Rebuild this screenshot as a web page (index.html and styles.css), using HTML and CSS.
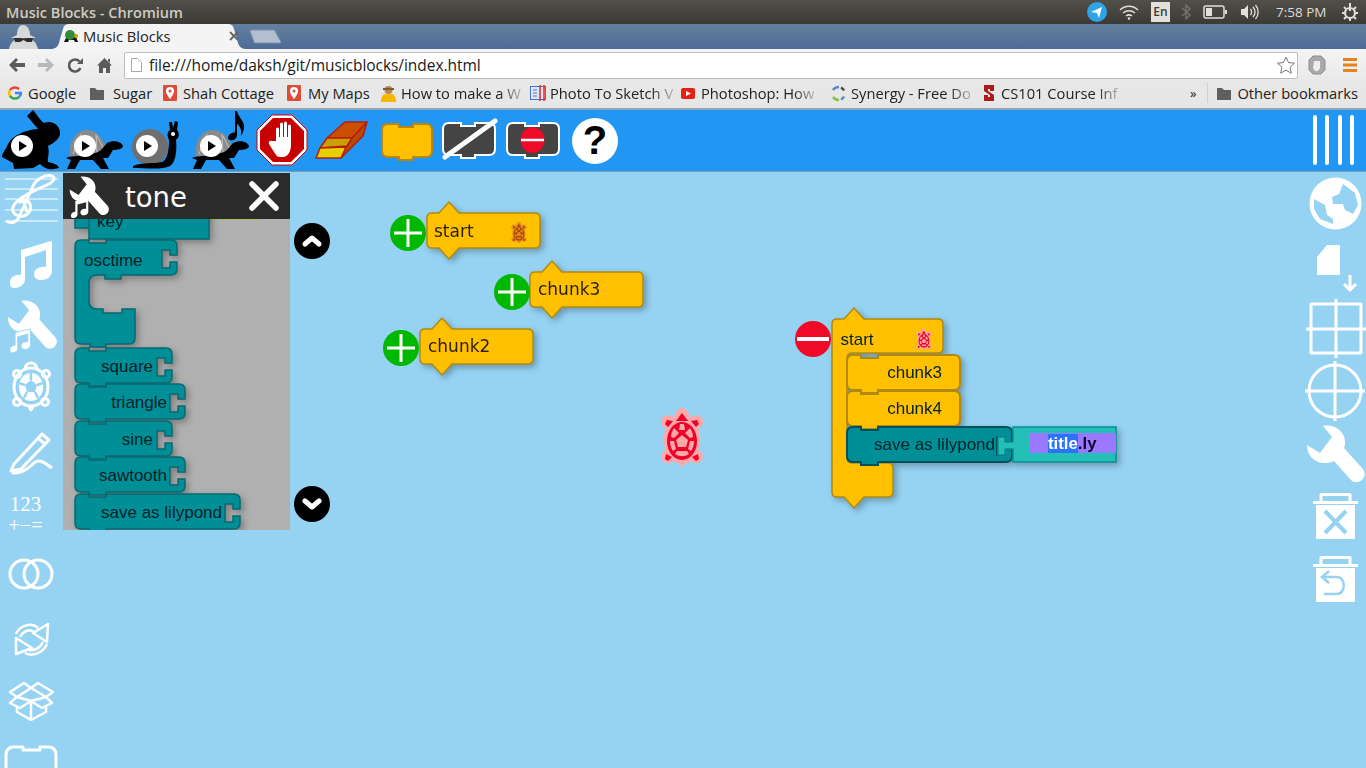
FILE: index.html
```html
<!DOCTYPE html>
<html lang="en">
<head>
<meta charset="utf-8">
<title>Music Blocks</title>
<link rel="stylesheet" href="styles.css">
</head>
<body>
<svg class="defs" aria-hidden="true">
  <defs>
    <symbol id="run-turtle" viewBox="0 0 63 64">
      <path fill="#8a8a8a" d="M7 48C5 35 12 22 24 22c11 0 16 10 21 20l-7 4-8 2z"/>
      <path fill="none" stroke="#c4c4c4" d="M10 46l8-20M33 26l1 20M40 40l-6-12"/>
      <path fill="#000" d="M3 50c5-3 27-1 35-8l6-7c6-3 14-2 16 3 0 3-6 4-10 4l-5 8h-5l6 11h-8l-8-9H17l-5 9H4l4-9z"/>
      <circle cx="22" cy="38" r="11" fill="#fff"/>
      <path fill="#000" d="M19 33l8 5-8 5z"/>
    </symbol>
    <path id="wrench" d="M17 1C27-1 38 5 39 16c0 3 0 5-1 7l18 20c4 4 3 9 0 12-4 3-8 3-11 0L28 36c-8 4-18 2-23-4-3-4-4-8-4-12l13 8 12-16z"/>
    <path id="note-glyph" d="M6 4l18-4v19c0 3-3 5-6 5s-5-2-5-4c0-3 3-5 6-5h2V6L9 9v14c0 3-3 5-6 5s-3-2-3-4c0-3 3-5 6-5z"/>
    <g id="turtle-art">
      <path class="t-halo" d="M22 0c4 0 7 5 8 10 3-3 8-4 11-1s3 8-1 10l-2 2c3 6 3 15 0 21 4 1 6 6 4 10-3 4-8 4-11 1-2 1-4 2-6 3l-3 3-3-3c-2-1-4-2-6-3-3 3-8 3-11-1-2-4 0-9 4-10-3-6-3-15 0-21l-2-2C0 17 0 12 3 9s8-2 11 1c1-5 4-10 8-10z"/>
      <path class="t-body" d="M22 5l6 8H16zM7 12l6 1-5 6-3-3zM37 12l2 4-3 3-5-6zM6 46l6 3-4 4-3-2zM38 46l1 5-3 2-4-4z"/>
      <ellipse class="t-body" cx="22" cy="33" rx="15" ry="19"/>
      <path class="t-halo" d="M22 27l6 5-2 7h-8l-2-7zM14 20l5 5-5 5-3-1c0-3 1-6 3-9zM30 20c2 3 3 6 3 9l-3 1-5-5zM20 16h4l1 6h-6zM10 33l4 0 2 8-3 2c-2-3-3-6-3-10zM34 33c0 4-1 7-3 10l-3-2 2-8zM17 43h10l2 3c-4 3-10 3-14 0z"/>
    </g>
    <path id="hat" d="M5 11h7L22 0l10 11h76q5 0 5 5v25q0 5-5 5H32L22 57 12 46H5q-5 0-5-5V16q0-5 5-5z"/>
    <path id="plain-block" d="M6 0h8v3h17V0h76q6 0 6 6v23q0 6-6 6H31v3H14v-3H6q-6 0-6-6V6q0-6 6-6z"/>
  </defs>
</svg>

<header class="titlebar">
  <span class="window-title">Music Blocks - Chromium</span>
  <div class="tray">
    <svg class="tray-telegram" width="20" height="20" viewBox="0 0 20 20"><circle cx="10" cy="10" r="10" fill="#2fa3e6"/><path fill="#fff" d="M4 10l11-5-3 11-2-5z"/></svg>
    <svg class="tray-wifi" width="20" height="16" viewBox="0 0 20 16"><g fill="none" stroke="#e0ded8" stroke-width="1.5"><path d="M1 6c5-5 13-5 18 0M4 9c3.500-3 8.500-3 12 0M7 12c2-1.500 4-1.500 6 0"/></g><circle cx="10" cy="14.500" r="1.300" fill="#e0ded8"/></svg>
    <span class="tray-lang">En</span>
    <svg class="tray-bt" width="10" height="16" viewBox="0 0 10 16"><path fill="none" stroke="#77756f" stroke-width="1.300" d="M1 4l8 7-4 4V1l4 4-8 7"/></svg>
    <svg class="tray-batt" width="24" height="14" viewBox="0 0 24 14"><rect x="1" y="1" width="20" height="12" rx="2" fill="none" stroke="#e0ded8" stroke-width="1.500"/><rect x="3" y="3" width="6" height="8" fill="#e0ded8"/><rect x="22" y="5" width="2" height="4" fill="#e0ded8"/></svg>
    <svg class="tray-vol" width="20" height="16" viewBox="0 0 20 16"><path fill="#e0ded8" d="M1 5h3l4-4v14l-4-4H1z"/><path fill="none" stroke="#e0ded8" stroke-width="1.300" d="M10.500 5c1.500 2 1.500 4 0 6M13 3c2.500 3 2.500 7 0 10M15.500 1c3.500 4 3.500 10 0 14"/></svg>
    <span class="tray-time">7:58 PM</span>
    <svg class="tray-power" width="18" height="18" viewBox="0 0 18 18"><circle cx="9" cy="10" r="5" fill="none" stroke="#e0ded8" stroke-width="2.200"/><path stroke="#e0ded8" stroke-width="2" d="M9 0v8M1 10h2M15 10h2M3 4l2 2M15 4l-2 2M3 16l2-2M15 16l-2-2M9 15v3"/></svg>
  </div>
</header>

<div class="tabstrip">
  <svg class="incognito" width="33" height="24" viewBox="0 0 33 24"><path fill="#d8d8d8" d="M10 10C10 4 12 0 16 0s7 4 7 10l6 3H4zM2 24c1-5 4-9 8-10h13c4 1 7 5 8 10z"/><path fill="#303030" d="M7 13h7l2.500 1 2.500-1h7l-1 4h-5l-3.500-2-3.500 2H8z"/></svg>
  <div class="tab">
    <svg class="tab-shape" width="193" height="25" viewBox="0 0 193 25" preserveAspectRatio="none"><path fill="#f4f4f4" d="M0 25C6 24 7 20 8 15L11 5C12 1 14 0 18 0H175C179 0 181 1 182 5L185 15C186 20 187 24 193 25Z"/></svg>
    <svg class="tab-fav" width="16" height="16" viewBox="0 0 16 16"><path fill="#111" d="M1 14l2-4 10-1 2 5h-3l-1-2H6l-1 2z"/><ellipse cx="7" cy="7" rx="5" ry="5" fill="#2e8b3a"/><circle cx="13" cy="8" r="2" fill="#c8a000"/></svg>
    <span class="tab-title">Music Blocks</span>
    <svg class="tab-close" width="10" height="10" viewBox="0 0 10 10"><path stroke="#666" stroke-width="1.800" d="M1 1l8 8M9 1L1 9"/></svg>
  </div>
  <svg class="newtab" width="33" height="15" viewBox="0 0 33 15"><path fill="#b3bfd0" stroke="#7c8ea9" d="M1 2c0-1 1-1 2-1h21c1 0 2 0 2 1l6 11c0 1-1 1-2 1H7c-1 0-2 0-2-1z"/></svg>
</div>

<nav class="navbar">
  <svg class="nav-back" width="16" height="14" viewBox="0 0 16 14"><path fill="#5a5a5a" d="M7 0l2 2-3 3h10v4H6l3 3-2 2-7-7z"/></svg>
  <svg class="nav-fwd" width="16" height="14" viewBox="0 0 16 14"><path fill="#b9b9b9" d="M9 0L7 2l3 3H0v4h10l-3 3 2 2 7-7z"/></svg>
  <svg class="nav-reload" width="15" height="15" viewBox="0 0 15 15"><path fill="none" stroke="#5a5a5a" stroke-width="2.600" d="M12.500 10A6 6 0 1 1 11.500 3.500"/><path fill="#5a5a5a" d="M9 6h6V0z"/></svg>
  <svg class="nav-home" width="15" height="15" viewBox="0 0 15 15"><path fill="#5a5a5a" d="M7.500 0L15 7.500h-2V15H9v-5H6v5H2V7.500H0zM11 1h2v4l-2-2z"/></svg>
  <div class="omnibox">
    <svg class="page-icon" width="11" height="14" viewBox="0 0 11 14"><path fill="#fff" stroke="#a8a8a8" d="M.5.500h6l4 4v9H.5z"/></svg>
    <span class="url">file:///home/daksh/git/musicblocks/index.html</span>
    <svg class="star" width="18" height="18" viewBox="0 0 18 18"><path fill="#fff" stroke="#777" d="M9 1l2.500 5.500 6 .7-4.400 4 1.200 6L9 14.200 3.700 17.200l1.200-6-4.400-4 6-.7z"/></svg>
  </div>
  <svg class="adblock" width="18" height="20" viewBox="0 0 18 20"><path fill="#a9a9a9" stroke="#8e8e8e" d="M5 1h8l4 4v10l-4 4H5l-4-4V5z"/><path fill="#eee" d="M6 6h6v7l-2 3H7l-2-3z"/></svg>
  <svg class="menu-icon" width="14" height="14" viewBox="0 0 14 14"><path fill="#e8821c" d="M0 0h14v3H0zM0 5.500h14v3H0zM0 11h14v3H0z"/></svg>
</nav>

<div class="bookmarks">
  <div class="bm"><svg class="bm-icon" width="14" height="14" viewBox="0 0 14 14"><path fill="none" stroke="#4285f4" stroke-width="2.500" d="M7 7h6a6 6 0 0 1-2 4"/><path fill="none" stroke="#ea4335" stroke-width="2.500" d="M2 4a6 6 0 0 1 9-1"/><path fill="none" stroke="#fbbc05" stroke-width="2.500" d="M2 10a6 6 0 0 1 0-6"/><path fill="none" stroke="#34a853" stroke-width="2.500" d="M11 11a6 6 0 0 1-9-1"/></svg><span>Google</span></div>
  <div class="bm bm-folder"><svg class="bm-icon" width="14" height="13" viewBox="0 0 14 13"><path fill="#5f5f5f" d="M0 1h5l2 2h7v10H0z"/></svg><span>Sugar</span></div>
  <div class="bm"><svg class="bm-icon" width="14" height="16" viewBox="0 0 14 16"><rect width="14" height="16" rx="1" fill="#dd4b39"/><path fill="#fff" d="M7 2a4 4 0 0 1 4 4c0 3-4 8-4 8S3 9 3 6a4 4 0 0 1 4-4z"/><circle cx="7" cy="6" r="1.500" fill="#dd4b39"/></svg><span>Shah Cottage</span></div>
  <div class="bm bm-wider"><svg class="bm-icon" width="14" height="16" viewBox="0 0 14 16"><rect width="14" height="16" rx="1" fill="#dd4b39"/><path fill="#fff" d="M7 2a4 4 0 0 1 4 4c0 3-4 8-4 8S3 9 3 6a4 4 0 0 1 4-4z"/><circle cx="7" cy="6" r="1.500" fill="#dd4b39"/></svg><span>My Maps</span></div>
  <div class="bm bm-tight"><svg class="bm-icon" width="17" height="17" viewBox="0 0 17 17"><path fill="#f5b700" d="M1 17c0-4 1-7 4-8h7c3 1 4 4 4 8z"/><circle cx="8.500" cy="5" r="4" fill="#b08a50"/><rect x="3" y="3" width="11" height="2" fill="#7c5c30"/></svg><span class="fade">How to make a W</span></div>
  <div class="bm bm-tight"><svg class="bm-icon" width="16" height="16" viewBox="0 0 16 16"><rect x=".5" y="1.500" width="15" height="13" fill="#dfe8f7" stroke="#4a72c8"/><path stroke="#4a72c8" d="M3 5h4M3 8h4M3 11h4"/><path stroke="#e22" stroke-width="1.500" d="M10 0v16M14 0v16"/></svg><span class="fade">Photo To Sketch V</span></div>
  <div class="bm"><svg class="bm-icon" width="14" height="11" viewBox="0 0 14 11"><rect width="14" height="11" rx="2" fill="#e62117"/><path fill="#fff" d="M5 3l5 2.500L5 8z"/></svg><span class="fade">Photoshop: How</span></div>
  <div class="bm bm-tight"><svg class="bm-icon" width="17" height="17" viewBox="0 0 17 17"><g fill="none" stroke-width="2.500"><path stroke="#5b86c5" d="M3 5a7 7 0 0 1 6-3"/><path stroke="#444" d="M11 2.500a7 7 0 0 1 3 3"/><path stroke="#8dbf4b" d="M3 12a7 7 0 0 0 6 3"/><path stroke="#5b86c5" d="M11 14.500a7 7 0 0 0 3-3"/></g></svg><span class="fade">Synergy - Free Do</span></div>
  <div class="bm"><svg class="bm-icon" width="12" height="16" viewBox="0 0 12 16"><path fill="#a81c1c" d="M1 0h10v6H7V4H5v2l6 4v6H1v-6h4v2h2v-2L1 6z"/></svg><span class="fade">CS101 Course Inf</span></div>
  <div class="bm-end">
    <span class="chevrons">»</span>
    <span class="bm-sep"></span>
    <div class="bm"><svg class="bm-icon" width="14" height="13" viewBox="0 0 14 13"><path fill="#5f5f5f" d="M0 1h5l2 2h7v10H0z"/></svg><span>Other bookmarks</span></div>
  </div>
</div>

<div class="toolbar">
  <div class="tool"><svg viewBox="0 0 63 64"><path fill="#000" d="M27 8L33 2C36 5 38 10 44 15C50 12 59 15 60 24C61 30 54 35 48 38C50 46 47 50 48 54C52 55 58 56 59 60L54 61C48 62 44 60 40 56L33 60L14 61L13 55L2 49C2 45 5 43 8 36C12 28 24 22 38 21Z"/><circle cx="22" cy="38" r="11" fill="#fff"/><path fill="#000" d="M19 33l8 5-8 5z"/></svg></div>
  <div class="tool"><svg viewBox="0 0 63 64"><use href="#run-turtle"/></svg></div>
  <div class="tool"><svg viewBox="0 0 63 64"><circle cx="24" cy="39" r="18" fill="#6f6f6f"/><path fill="#000" d="M7 58c9-4 21-2 29-4 6-2 7-14 7-22-2-4-2-8 1-10l-1-8h3l1 6 2-7 3 1-1 8c3 3 2 8-1 10 1 10 0 22-6 26-8 4-24 2-37 2z"/><circle cx="21" cy="38" r="11" fill="#fff"/><path fill="#000" d="M18 33l8 5-8 5z"/><circle cx="47" cy="26" r="2" fill="#fff"/></svg></div>
  <div class="tool"><svg viewBox="0 0 63 64"><use href="#run-turtle"/><path fill="#000" d="M46 3h2c1 6 8 10 7 17-.5 3-1 5-3 8 1-6-1-10-4-12v11c0 4-4 6-7 5-3-1-2-4 0-6 2-1 4-2 5-1z"/></svg></div>
  <div class="tool"><svg viewBox="0 0 63 64"><path fill="#fff" stroke="#d40000" d="M20 7h20l15 15v20L40 57H20L5 42V22z"/><path fill="#c80000" d="M21 10h18l13 13v18L39 54H21L8 41V23z"/><path fill="#fff" d="M24 33V21a1.500 1.500 0 0 1 3 0v8h1V16a1.500 1.500 0 0 1 3 0v13h1V15a1.500 1.500 0 0 1 3 0v14h1V18a1.500 1.500 0 0 1 3 0v19c0 6-3 12-8 12h-3c-3 0-4-2-6-5l-5-8c-1-2 1-4 3-3z"/></svg></div>
  <div class="tool"><svg viewBox="0 0 63 64"><g stroke="#b81c10" stroke-width="1.500" stroke-linejoin="round"><path fill="#c85000" d="M30 14h22L37 30H12z"/><path fill="#b84800" d="M52 14l-4 14-22 22 2-11 4-1 5-8z"/><path fill="#c8a000" d="M12 30h25l-5 8-27 2z"/><path fill="#e8d000" d="M5 40l26-1-5 11H1z"/></g></svg></div>
  <div class="tool"><svg viewBox="0 0 63 64"><path fill="#ffc000" stroke="#b8860b" stroke-width="2" d="M10 16h11v3h14v-3h13q6 0 6 6v21q0 6-6 6H35v3H21v-3H10q-6 0-6-6V22q0-6 6-6z"/></svg></div>
  <div class="tool"><svg viewBox="0 0 63 64"><path fill="#444" stroke="#fff" stroke-width="2" d="M8 15h12v3h14v-3h14q6 0 6 6v20q0 6-6 6H34v3H20v-3H8q-6 0-6-6V21q0-6 6-6z"/><path stroke="#fff" stroke-width="5" stroke-linecap="round" d="M54 13L4 49"/></svg></div>
  <div class="tool"><svg viewBox="0 0 63 64"><path fill="#444" stroke="#fff" stroke-width="2" d="M9 15h12v3h14v-3h14q6 0 6 6v20q0 6-6 6H35v3H21v-3H9q-6 0-6-6V21q0-6 6-6z"/><ellipse cx="28.500" cy="32" rx="12" ry="13" fill="#f00a28"/><path stroke="#fff" stroke-width="2.500" d="M17 32h23"/></svg></div>
  <div class="tool"><svg viewBox="0 0 63 64"><circle cx="28" cy="33" r="23" fill="#fff"/><text class="help-mark" x="28" y="46" text-anchor="middle">?</text></svg></div>
  <div class="menu-bars">
    <span></span><span></span><span></span><span></span>
  </div>
</div>

<main class="workspace">
  <svg class="canvas" viewBox="0 172 1366 596" role="img">
    <g class="shadow">
      <use class="yellow" href="#hat" x="427" y="202"/>
      <use class="yellow" href="#hat" x="530" y="261"/>
      <use class="yellow" href="#hat" x="420" y="318"/>
    </g>
    <text class="block-label" x="434" y="236.500">start</text>
    <text class="block-label" x="538" y="294.500">chunk3</text>
    <text class="block-label" x="428" y="351.500">chunk2</text>
    <use class="turtle-dark" href="#turtle-art" transform="translate(511 222) scale(.36)"/>

    <g><circle class="plus-bg" cx="408" cy="233" r="18"/><path class="cross" d="M394 233h28M408 219v28"/></g>
    <g><circle class="plus-bg" cx="512" cy="292" r="18"/><path class="cross" d="M498 292h28M512 278v28"/></g>
    <g><circle class="plus-bg" cx="401" cy="348" r="18"/><path class="cross" d="M387 348h28M401 334v28"/></g>

    <use class="turtle-red" href="#turtle-art" transform="translate(660 408)"/>

    <g class="shadow">
      <path class="yellow" d="M837 319h7l10-11 10 11h74q5 0 5 5v24q0 5-5 5h-86q-5 0-5 5v100q0 5 5 5h36q5 0 5 5v24q0 5-5 5h-24l-10 11-10-11h-7q-5 0-5-5V324q0-5 5-5z"/>
      <use class="yellow stacked" href="#plain-block" x="847" y="355"/>
      <use class="yellow stacked" href="#plain-block" x="847" y="391"/>
      <path class="teal-active" d="M853 427h8v3h17v-3h128q6 0 6 6v9h-7v-5h-8v18h8v-6h7v7q0 6-6 6H878v3h-17v-3h-8q-6 0-6-6v-23q0-6 6-6z"/>
      <path class="value-box" d="M1013 427h103v35h-103v-13h-8v6h-7v-18h7v5h8z"/>
    </g>
    <use class="turtle-red" href="#turtle-art" transform="translate(916 329) scale(.36)"/>
    <text class="block-label sans-start" x="840.500" y="345">start</text>
    <text class="block-label sans-end" x="942" y="378">chunk3</text>
    <text class="block-label sans-end" x="942" y="414">chunk4</text>
    <text class="block-label sans-end" x="995" y="450">save as lilypond</text>
    <rect class="input-bg" x="1030" y="433" width="86" height="20"/>
    <rect class="input-sel" x="1048" y="434" width="30" height="19"/>
    <text class="input-text" x="1048" y="448.500"><tspan class="input-text-sel">title</tspan>.ly</text>

    <circle class="minus-bg" cx="813" cy="339" r="18"/>
    <path class="minus-bar" d="M797 339h32"/>
  </svg>

  <aside class="side side-left">
    <div class="side-cell"><svg viewBox="0 0 63 63"><g class="thin"><path d="M5 7h53M5 17h53M5 27h53M5 38h53M5 49h53"/></g><path class="line2" d="M6 49c6 3 11 1 13-4l14-31c3-6 11-12 19-10 5 2 0 7-5 9-9 4-27 11-33 20-4 7 2 12 9 11 6-1 9-7 7-12-2-5-8-4-11-1"/><path class="line2" d="M22 24l5 16"/></svg></div>
    <div class="side-cell"><svg viewBox="0 0 63 63"><path class="fill-white" d="M21 15l30-9c1 0 1 1 1 2v28c0 5-5 9-10 9s-8-2-8-6c0-5 6-8 12-7V15L25 22v22c0 5-5 9-10 9s-5-3-5-6c0-5 6-8 11-7z"/></svg></div>
    <div class="side-cell"><svg viewBox="0 0 63 63"><use class="fill-white" href="#wrench" transform="translate(7 2) scale(.85)"/><g class="note-sm"><use href="#note-glyph" transform="translate(10 31) scale(.85)"/></g></svg></div>
    <div class="side-cell"><svg viewBox="0 0 63 63"><g class="line2"><ellipse cx="31" cy="26" rx="17" ry="19"/><path d="M25 8a6 6 0 0 1 12 0"/><circle cx="17" cy="13" r="3.500"/><circle cx="46" cy="13" r="3.500"/><circle cx="17" cy="41" r="3.500"/><circle cx="45" cy="41" r="3.500"/><path d="M29 46l2 3 2-3"/></g><ellipse class="fill-white" cx="31" cy="26" rx="12" ry="14"/><path class="fill-blue" d="M31 19l6 5-2 7h-8l-2-7z"/><path class="blue-line-thin" d="M31 12v7M19 22l6 2M43 22l-6 2M24 37l3-6M38 37l-3-6"/></svg></div>
    <div class="side-cell"><svg viewBox="0 0 63 63"><g class="line2"><path d="M14 40l28-30 7 6-28 29-10 2z"/><path d="M38 14l7 6M12 49c10 1 16-5 21-9 5-6 11-2 19 4"/></g></svg></div>
    <div class="side-cell side-math"><span class="math-top">123</span><span class="math-bottom">+−=</span></div>
    <div class="side-cell"><svg viewBox="0 0 63 63"><g class="line2"><circle cx="24" cy="24" r="14"/><circle cx="38" cy="24" r="14"/></g></svg></div>
    <div class="side-cell"><svg viewBox="0 0 63 63"><g class="line-mid"><path d="M48 11l-1 18-14-9zM16 41V25l16 10z"/><path d="M16 21c4-9 16-12 22-6M20 24c4-7 10-8 14-5M47 31c-4 9-15 13-22 9M43 29c-3 7-10 9-14 8"/></g></svg></div>
    <div class="side-cell"><svg viewBox="0 0 63 63"><g class="line-mid"><path d="M31 12l-7-5-14 9 7 5-7 6 10 5 11-7 11 7 10-5-6-6 7-5-15-9zM17 21l14-9 15 9-15 4z"/><path d="M17 30v6l14 8 15-8v-6M31 25v19"/></g></svg></div>
    <div class="side-cell"><svg viewBox="0 0 63 63"><path class="line2" d="M18 8h5v3h17V8h8q8 0 8 8v40H6V16q0-8 8-8z"/></svg></div>
  </aside>

  <section class="palette">
    <div class="palette-head">
      <svg class="palette-icon" width="44" height="44" viewBox="0 0 44 44"><use class="fill-white" href="#wrench" transform="translate(3 2) scale(.68)"/><use class="fill-white note-mini" href="#note-glyph" transform="translate(5 24) scale(.72)"/></svg>
      <span class="palette-name">tone</span>
      <svg class="palette-close" width="30" height="30" viewBox="0 0 30 30"><path stroke="#fff" stroke-width="5.500" stroke-linecap="round" d="M3 3l24 24M27 3L3 27"/></svg>
    </div>
    <div class="palette-body">
      <svg class="palette-blocks" width="227" height="311" viewBox="0 0 227 311">
        <path class="hidden-edge" d="M147 .5h50"/>
        <g class="shadow">
          <path class="teal" d="M26-20h120v40H26zM12-1h14v10H12z"/>
          <path class="teal" d="M18 21h8v3h17v-3h65q6 0 6 6v9h-7v-5h-8v18h8v-6h7v7q0 6-6 6H58v4H42v-4h-8q-8 0-8 8v18q0 8 8 8h6v4h19v-4h13v29q0 6-6 6H43v3H27v-3h-9q-6 0-6-6V27q0-6 6-6z"/>
          <path class="teal" d="M18 129h8v3h17v-3h60q6 0 6 6v9h-7v-5h-8v18h8v-6h7v7q0 6-6 6H43v3H26v-3h-8q-6 0-6-6v-23q0-6 6-6z"/>
          <path class="teal" d="M18 165h8v3h17v-3h73q6 0 6 6v9h-7v-5h-8v18h8v-6h7v7q0 6-6 6H43v3H26v-3h-8q-6 0-6-6v-23q0-6 6-6z"/>
          <path class="teal" d="M18 202h8v3h17v-3h60q6 0 6 6v9h-7v-5h-8v18h8v-6h7v7q0 6-6 6H43v3H26v-3h-8q-6 0-6-6v-23q0-6 6-6z"/>
          <path class="teal" d="M18 238h8v3h17v-3h73q6 0 6 6v9h-7v-5h-8v18h8v-6h7v7q0 6-6 6H43v3H26v-3h-8q-6 0-6-6v-23q0-6 6-6z"/>
          <path class="teal" d="M18 275h8v3h17v-3h128q6 0 6 6v9h-7v-5h-8v18h8v-6h7v7q0 6-6 6H43v3H26v-3h-8q-6 0-6-6v-23q0-6 6-6z"/>
        </g>
        <text class="block-label sans-start" x="34" y="8">key</text>
        <text class="block-label sans-start" x="21" y="47">osctime</text>
        <text class="block-label sans-end" x="90" y="153">square</text>
        <text class="block-label sans-end" x="104" y="189">triangle</text>
        <text class="block-label sans-end" x="90" y="226">sine</text>
        <text class="block-label sans-end" x="104" y="262">sawtooth</text>
        <text class="block-label sans-end" x="159" y="299">save as lilypond</text>
      </svg>
    </div>
  </section>

  <div class="scrollers">
    <svg class="scroll-btn" width="36" height="36" viewBox="0 0 36 36"><circle cx="18" cy="18" r="18" fill="#000"/><path class="chevron" d="M11 21l7-6 7 6"/></svg>
    <svg class="scroll-btn" width="36" height="36" viewBox="0 0 36 36"><circle cx="18" cy="18" r="18" fill="#000"/><path class="chevron" d="M11 15l7 6 7-6"/></svg>
  </div>

  <aside class="side side-right">
    <div class="side-cell"><svg viewBox="0 0 63 63"><circle class="fill-white" cx="32.500" cy="31.500" r="26"/><path class="fill-blue" d="M40 12l12 9 3 12-5 9-8-4-2-6H30l-1-7 7-3zM11 27l11 6 2 10 6 4v5l-13-5-6-10z"/></svg></div>
    <div class="side-cell"><svg viewBox="0 0 63 63"><path class="fill-white" d="M14 22l10-12h13v30H14z"/><path class="line2" d="M47 40v15M41 49l6 6 6-6"/></svg></div>
    <div class="side-cell"><svg viewBox="0 0 63 63"><path class="line2" d="M8 6h50v49H8zM33 1v59M3 31h60"/></svg></div>
    <div class="side-cell"><svg viewBox="0 0 63 63"><g class="line2"><circle cx="32" cy="30" r="26"/><path d="M32 0v60M2 30h60"/></g></svg></div>
    <div class="side-cell"><svg viewBox="0 0 63 63"><use class="fill-white" href="#wrench" transform="translate(3 1)"/></svg></div>
    <div class="side-cell"><svg viewBox="0 0 63 63"><path class="line2" d="M10 15.500h45M18 14V7.500h29V14"/><path class="fill-white" d="M13 18h39v33q0 1-1 1H14q-1 0-1-1z"/><path class="blue-line" d="M22 24l21 22M43 24L22 46"/></svg></div>
    <div class="side-cell"><svg viewBox="0 0 63 63"><path class="line2" d="M10 15.500h45M18 14V7.500h29V14"/><path class="fill-white" d="M13 18h39v33q0 1-1 1H14q-1 0-1-1z"/><path class="blue-line-thin" d="M26 21l-7 6 7 6M19 27h15c9 0 9 17 0 17H21"/></svg></div>
  </aside>
</main>
</body>
</html>
```

FILE: styles.css
```css
* { box-sizing: border-box; }
html, body { margin: 0; padding: 0; height: 768px; overflow: hidden; }
body { display: flex; flex-direction: column; width: 1366px; background: #96d3f3; font-family: "Open Sans", "Noto Sans", sans-serif; }
.defs { position: absolute; width: 0; height: 0; }
svg { display: block; flex: none; }

.titlebar { height: 24px; display: flex; align-items: center; justify-content: space-between; background: linear-gradient(#504f49, #3b3a35); padding: 0 7px 0 6px; }
.window-title { color: #cfccc3; font-size: 14.500px; font-weight: 600; letter-spacing: .03px; }
.tray { display: flex; align-items: center; }
.tray-wifi { margin-left: 12px; }
.tray-lang { margin-left: 12px; width: 19px; height: 20px; background: #e3e0da; color: #3c3b37; font-size: 12px; font-weight: 600; text-align: center; line-height: 20px; }
.tray-bt { margin-left: 11px; }
.tray-batt { margin-left: 12px; }
.tray-vol { margin-left: 13px; }
.tray-time { margin-left: 16px; color: #dedcd5; font-size: 13.500px; width: 58px; }
.tray-power { margin-left: 7px; }

.tabstrip { height: 25px; display: flex; align-items: flex-end; background: linear-gradient(#64809f, #4d6b96); padding-left: 7px; }
.tab { position: relative; width: 193px; height: 25px; margin-left: 12px; display: flex; align-items: center; padding: 0 0 2px 11px; }
.tab-shape { position: absolute; left: 0; top: 0; }
.tab-fav, .tab-title, .tab-close { position: relative; }
.tab-title { margin-left: 4px; width: 150px; font-size: 14.700px; color: #222; }
.tab-close { margin-left: -4px; }
.newtab { margin: 0 0 5px 4px; }

.navbar { height: 32px; display: flex; align-items: center; background: linear-gradient(#f4f4f4, #e9e9e9); padding-left: 9px; }
.nav-fwd { margin-left: 13px; }
.nav-reload { margin-left: 14px; }
.nav-home { margin-left: 14px; }
.omnibox { margin-left: 12px; width: 1174px; height: 27px; background: #fff; border: 1px solid #bdbdbd; border-radius: 2px; display: flex; align-items: center; padding-left: 6px; }
.url { margin-left: 7px; font-size: 15.500px; color: #1a1a1a; letter-spacing: -.05px; flex: 1; }
.star { margin-right: 2px; }
.adblock { margin-left: 10px; }
.menu-icon { margin-left: 17px; }

.bookmarks { height: 27px; display: grid; grid-template-columns: 82px 73px 124px 93px 150px 151px 149px 153px 142px 1fr; align-items: center; padding: 0 0 3px 8px; background: #e7e7e7; font-size: 14.700px; color: #222; }
.bm { display: flex; align-items: center; gap: 6px; white-space: nowrap; }
.bm-folder .bm-icon { margin-right: 3px; }
.bm-wider { gap: 7px; }
.bm-tight { gap: 4px; }
.fade { display: block; -webkit-mask-image: linear-gradient(90deg, #000 82%, rgba(0, 0, 0, .25)); mask-image: linear-gradient(90deg, #000 82%, rgba(0, 0, 0, .25)); }
.bm-end { display: flex; align-items: center; justify-content: flex-end; padding-right: 8px; }
.chevrons { margin-right: 11px; font-size: 13px; }
.bm-sep { width: 1px; height: 20px; background: #cfcfcf; margin-right: 9px; }

.toolbar { height: 64px; background: #2196f3; border-top: 2px solid #8ea5b8; border-bottom: 1px solid #7a9cb4; display: flex; position: relative; }
.tool { width: 63px; height: 64px; margin-top: -2px; flex: none; }
.tool svg { width: 63px; height: 64px; }
.help-mark { font: 700 40px "Liberation Sans", sans-serif; fill: #000; }
.menu-bars { margin-left: auto; display: flex; gap: 8.500px; padding: 5px 12px 0 0; }
.menu-bars span { width: 4px; height: 50px; background: #fff; border-radius: 2px; }

.workspace { flex: 1; position: relative; display: flex; background: #96d3f3; overflow: hidden; }
.canvas { position: absolute; left: 0; top: 0; width: 1366px; height: 596px; }
.side { width: 63px; flex: none; position: relative; }
.side-right { margin-left: auto; }
.side-cell { width: 63px; height: 63px; }
.side-cell svg { width: 63px; height: 63px; overflow: visible; }
.side-math { display: flex; flex-direction: column; align-items: center; color: #fff; font-family: "Liberation Serif", serif; padding: 6px 12px 0 0; }
.math-top { font-size: 21px; line-height: 22px; }
.math-bottom { font-size: 20px; line-height: 18px; margin-top: 1px; }
.line2 { fill: none; stroke: #fff; stroke-width: 3; stroke-linejoin: round; }
.line-mid { fill: none; stroke: #fff; stroke-width: 2.500; stroke-linejoin: round; }
.thin { fill: none; stroke: #fff; stroke-width: 1; }
.fill-white { fill: #fff; }
.fill-blue { fill: #96d3f3; }
.blue-line { fill: none; stroke: #96d3f3; stroke-width: 4; }
.blue-line-thin { fill: none; stroke: #96d3f3; stroke-width: 2.500; }
.note-sm { fill: #fff; stroke: #96d3f3; stroke-width: 1; }

.palette { width: 227px; height: 357px; margin-top: 1px; flex: none; display: flex; flex-direction: column; position: relative; }
.palette-head { height: 46px; background: #2b2b2b; display: flex; align-items: center; padding: 0 11px 0 3px; position: absolute; left: 0; top: 0; width: 227px; z-index: 2; }
.palette-name { margin-left: 15px; font: 27.500px "DejaVu Sans", sans-serif; color: #fff; flex: 1; padding-top: 2px; }
.palette-body { margin-top: 46px; height: 311px; background: #b0b0b0; overflow: hidden; }
.palette-blocks { overflow: visible; }
.hidden-edge { stroke: #a8c060; stroke-width: 1; }

.scrollers { width: 36px; height: 299px; margin: 51px 0 0 4px; display: flex; flex-direction: column; justify-content: space-between; flex: none; }
.chevron { fill: none; stroke: #fff; stroke-width: 5; stroke-linecap: round; stroke-linejoin: round; }

.shadow { filter: drop-shadow(3px 3px 3px rgba(0, 0, 0, .28)); }
.yellow { fill: #ffc000; stroke: #b08a10; stroke-width: 1.500; }
.stacked { stroke-width: 2; }
.teal { fill: #008f96; stroke: #0a6870; stroke-width: 1.500; }
.teal-active { fill: #008f96; stroke: #00515a; stroke-width: 2; }
.value-box { fill: #24c0b8; stroke: #0a8f96; stroke-width: 1.500; }
.block-label { font: 17px "DejaVu Sans", sans-serif; fill: #2a1f00; }
.sans-start { font-family: "Liberation Sans", sans-serif; fill: #02222a; }
.sans-end { font-family: "Liberation Sans", sans-serif; fill: #02222a; text-anchor: end; }
.input-bg { fill: #9a78ff; }
.input-sel { fill: #2a72ff; }
.input-text { font: 700 16.800px "Liberation Sans", sans-serif; fill: #100830; }
.input-text-sel { fill: #fff; }
.plus-bg { fill: #00b800; }
.cross { stroke: #fff; stroke-width: 3; fill: none; }
.minus-bg { fill: #f00a28; }
.minus-bar { stroke: #fff; stroke-width: 4; }
.t-halo { fill: var(--halo); }
.t-body { fill: var(--body); }
.turtle-red { --halo: #ffa8a8; --body: #f00028; }
.turtle-dark { --halo: #e88a20; --body: #a84a00; }
```
